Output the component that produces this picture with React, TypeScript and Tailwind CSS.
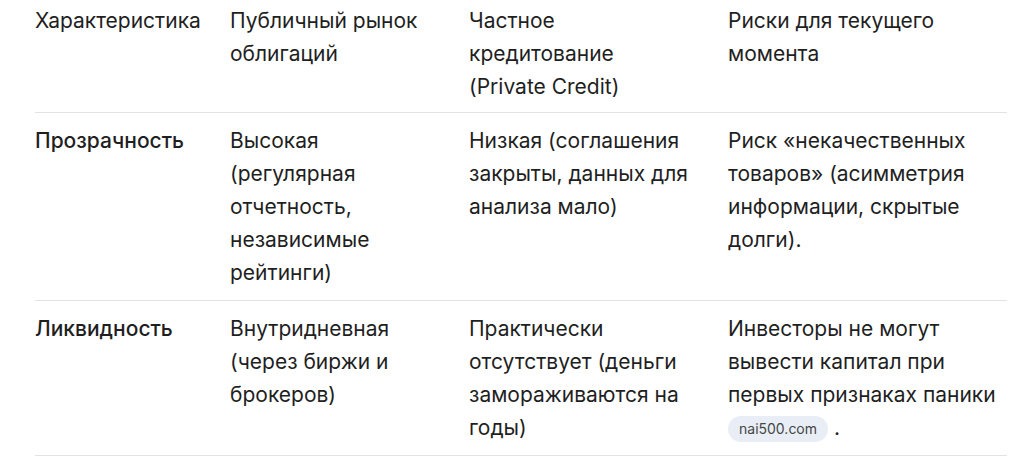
const rows = [
  {
    name: "Прозрачность",
    pub: "Высокая (регулярная отчетность, независимые рейтинги)",
    priv: "Низкая (соглашения закрыты, данных для анализа мало)",
    risk: "Риск «некачественных товаров» (асимметрия информации, скрытые долги).",
    source: null as string | null,
  },
  {
    name: "Ликвидность",
    pub: "Внутридневная (через биржи и брокеров)",
    priv: "Практически отсутствует (деньги замораживаются на годы)",
    risk: "Инвесторы не могут вывести капитал при первых признаках паники",
    source: "nai500.com",
  },
];

export default function App() {
  return (
    <div
      className="min-h-screen bg-white text-[#1f1f1f] text-[21px] leading-[33px]"
      style={{ fontFamily: "Inter, 'Noto Sans', sans-serif" }}
    >
      <div className="ml-[35px] w-[972px]">
        {/* Header */}
        <div className="grid grid-cols-[195px_239px_259px_1fr] border-b border-[#e3e3e3] pt-[4px] pb-[9px]">
          <div className="pr-5">Характеристика</div>
          <div className="pr-7">Публичный рынок облигаций</div>
          <div className="pr-[36px]">Частное кредитование (Private Credit)</div>
          <div className="pr-2">Риски для текущего момента</div>
        </div>

        {rows.map((r) => (
          <div
            key={r.name}
            className="grid grid-cols-[195px_239px_259px_1fr] border-b border-[#e3e3e3] py-[11px]"
          >
            <div className="pr-5 font-medium">{r.name}</div>
            <div className="pr-7">{r.pub}</div>
            <div className="pr-[36px]">{r.priv}</div>
            <div className="pr-2">
              {r.risk}
              {r.source && (
                <>
                  {" "}
                  <span className="inline-flex items-center h-[26px] px-[11px] rounded-full bg-[#e9eef6] text-[#444746] text-[14px] leading-none align-middle">
                    {r.source}
                  </span>{" "}
                  .
                </>
              )}
            </div>
          </div>
        ))}
      </div>
    </div>
  );
}
